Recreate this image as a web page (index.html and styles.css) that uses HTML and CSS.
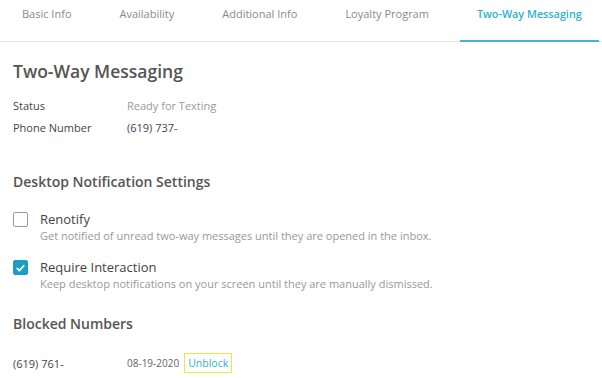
FILE: index.html
```html
<!DOCTYPE html>
<html lang="en">
<head>
  <meta charset="UTF-8">
  <title>Two-Way Messaging</title>
  <link rel="stylesheet" href="styles.css">
</head>
<body>
  <nav class="tabs">
    <a class="tab">Basic Info</a>
    <a class="tab">Availability</a>
    <a class="tab">Additional Info</a>
    <a class="tab">Loyalty Program</a>
    <a class="tab active">Two-Way Messaging</a>
  </nav>

  <main class="panel">
    <h1 class="title">Two-Way Messaging</h1>
    <dl class="info">
      <dt>Status</dt>
      <dd class="muted">Ready for Texting</dd>
      <dt>Phone Number</dt>
      <dd>(619) 737-</dd>
    </dl>

    <h2 class="section">Desktop Notification Settings</h2>
    <label class="option">
      <span class="check"></span>
      <span class="option-text">
        <span class="option-name">Renotify</span>
        <span class="option-desc">Get notified of unread two-way messages until they are opened in the inbox.</span>
      </span>
    </label>
    <label class="option">
      <span class="check checked">
        <svg viewBox="0 0 16 16" width="16" height="16"><path d="M4 8.6l2.6 2.6L12 5.2" fill="none" stroke="#fff" stroke-width="2.2" stroke-linecap="round" stroke-linejoin="round"/></svg>
      </span>
      <span class="option-text">
        <span class="option-name">Require Interaction</span>
        <span class="option-desc">Keep desktop notifications on your screen until they are manually dismissed.</span>
      </span>
    </label>

    <h2 class="section blocked-title">Blocked Numbers</h2>
    <div class="blocked-row">
      <span class="blocked-num">(619) 761-</span>
      <span class="blocked-date">08-19-2020</span>
      <a class="unblock">Unblock</a>
    </div>
  </main>
</body>
</html>
```

FILE: styles.css
```css
* {
  margin: 0;
  padding: 0;
  box-sizing: border-box;
}

body {
  font-family: 'Open Sans', 'Liberation Sans', sans-serif;
  background: #fff;
  color: #4a4a4a;
  width: 602px;
  height: 378px;
  overflow: hidden;
}

/* Tab bar */
.tabs {
  display: flex;
  align-items: flex-start;
  padding-left: 5px;
  border-bottom: 1px solid #e6e6e6;
  height: 42px;
}
.tab {
  flex-shrink: 0;
  white-space: nowrap;
  height: 42px;
  padding: 6px 17px 0;
  margin-right: 14px;
  font-size: 11px;
  line-height: 16px;
  color: #8a8a8a;
  border-bottom: 2px solid transparent;
}
.tab.active {
  font-size: 10.8px;
  font-weight: 600;
  color: #2bb2d3;
  border-bottom-color: #3db8d8;
  margin-right: 0;
}

/* Panel */
.panel {
  padding: 16px 13px 0;
}
.title {
  font-size: 17.5px;
  font-weight: 600;
  color: #555;
  line-height: 26px;
}

.info {
  display: grid;
  grid-template-columns: 114px auto;
  row-gap: 4px;
  margin-top: 13px;
  font-size: 11px;
  line-height: 18px;
}
.info dt {
  color: #444;
}
.info dd {
  color: #444;
}
.info dd.muted {
  color: #9a9a9a;
}

.section {
  font-size: 14px;
  font-weight: 600;
  color: #555;
  line-height: 20px;
  margin-top: 35px;
}

.option {
  display: flex;
  gap: 12px;
  margin-top: 19px;
}
.option + .option {
  margin-top: 15px;
}
.check {
  width: 15px;
  height: 15px;
  margin-top: 1px;
  border: 1px solid #9b9b9b;
  border-radius: 2px;
  flex-shrink: 0;
  display: flex;
  align-items: center;
  justify-content: center;
}
.check.checked {
  background: #1a9fc2;
  border-color: #1a9fc2;
}
.option-text {
  display: flex;
  flex-direction: column;
}
.option-name {
  font-size: 13px;
  color: #444;
  line-height: 17px;
}
.option-desc {
  font-size: 11px;
  color: #999;
  line-height: 16px;
}

.blocked-title {
  margin-top: 22px;
}

.blocked-row {
  display: flex;
  align-items: center;
  margin-top: 19px;
  font-size: 11px;
  color: #444;
}
.blocked-num {
  width: 114px;
}
.blocked-date {
  font-size: 10px;
  color: #666;
  margin-right: 5px;
}
.unblock {
  font-size: 10.5px;
  color: #2bb2d3;
  border: 1px solid #f2e34a;
  padding: 1px 3px;
  line-height: 16px;
}
```
